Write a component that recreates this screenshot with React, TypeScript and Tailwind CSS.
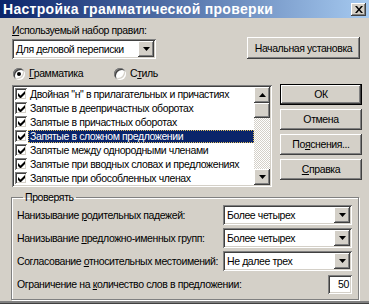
import type { ReactNode } from 'react'

const raised =
  'bg-[#d4d0c8] shadow-[inset_-1px_-1px_0_#404040,inset_1px_1px_0_#ffffff,inset_-2px_-2px_0_#808080,inset_2px_2px_0_#d4d0c8]'
const sunken =
  'bg-white shadow-[inset_1px_1px_0_#808080,inset_-1px_-1px_0_#ffffff,inset_2px_2px_0_#404040,inset_-2px_-2px_0_#d4d0c8]'

const rules = [
  'Двойная "н" в прилагательных и причастиях',
  'Запятые в деепричастных оборотах',
  'Запятые в причастных оборотах',
  'Запятые в сложном предложении',
  'Запятые между однородными членами',
  'Запятые при вводных словах и предложениях',
  'Запятые при обособленных членах',
]

function Arrow({ up = false }: { up?: boolean }) {
  return (
    <svg width="7" height="4" viewBox="0 0 7 4" className={up ? 'rotate-180' : ''}>
      <path d="M0 0h7L3.5 4z" fill="#000" />
    </svg>
  )
}

function Combo({ value, width }: { value: string; width: string }) {
  return (
    <div className={`${sunken} ${width} h-[20px] p-[2px] flex items-center shrink-0`}>
      <span className="flex-1 pl-[2px] whitespace-nowrap overflow-hidden">{value}</span>
      <div className={`${raised} w-[16px] h-[16px] flex items-center justify-center`}>
        <Arrow />
      </div>
    </div>
  )
}

function Button({ children, isDefault = false, className = '' }: { children: ReactNode; isDefault?: boolean; className?: string }) {
  if (isDefault) {
    return (
      <div className={`border border-black ${className}`}>
        <div className={`${raised} h-full flex items-center justify-center`}>{children}</div>
      </div>
    )
  }
  return <div className={`${raised} flex items-center justify-center ${className}`}>{children}</div>
}

function Check() {
  return (
    <div className={`${sunken} w-[12px] h-[12px] flex items-center justify-center shrink-0`}>
      <svg width="7" height="7" viewBox="0 0 7 7">
        <path d="M0 2v3l2 2h1l4-4V0L2.5 4.5z" fill="#000" />
      </svg>
    </div>
  )
}

function Radio({ checked, children }: { checked: boolean; children: ReactNode }) {
  return (
    <div className="flex items-center gap-[4px]">
      <div className="w-[12px] h-[12px] rounded-full bg-white shadow-[inset_1px_1px_0_#808080,inset_-1px_-1px_0_#ffffff,inset_2px_2px_0_#404040,inset_-2px_-2px_0_#d4d0c8] flex items-center justify-center">
        {checked && <div className="w-[4px] h-[4px] rounded-full bg-black" />}
      </div>
      <span>{children}</span>
    </div>
  )
}

function Row({ label, children }: { label: ReactNode; children: ReactNode }) {
  return (
    <div className="flex items-center h-[20px]">
      <span className="flex-1 whitespace-nowrap overflow-hidden">{label}</span>
      {children}
    </div>
  )
}

export default function App() {
  return (
    <div className="w-[369px] h-[304px] bg-[#d4d0c8] text-black text-[10.5px] leading-[13px] tracking-[-0.4px] font-['Liberation_Sans',Arial,sans-serif] shadow-[inset_0_-1px_0_#404040,inset_0_-3px_0_#808080] flex flex-col overflow-hidden">
      <div className="h-[18px] bg-[linear-gradient(90deg,#0a246a,#a6caf0)] flex items-center justify-between pl-[3px] pr-[3px]">
        <span className="text-white font-bold text-[14px] tracking-[0.3px] whitespace-nowrap">Настройка грамматической проверки</span>
        <div className={`${raised} w-[15px] h-[13px] flex items-center justify-center`}>
          <svg width="8" height="7" viewBox="0 0 8 7">
            <path d="M0 0h2l2 2.5L6 0h2L5 3.5 8 7H6L4 4.5 2 7H0l3-3.5z" fill="#000" />
          </svg>
        </div>
      </div>

      <div className="pl-[12px] pr-[7px] pt-[6px] flex flex-col">
        <div className="flex items-end justify-between">
          <div className="flex flex-col gap-[2px]">
            <span>
              <u>И</u>спользуемый набор правил:
            </span>
            <Combo value="Для деловой переписки" width="w-[144px]" />
          </div>
          <Button className="w-[113px] h-[22px] mr-[2px]">Начальная установка</Button>
        </div>

        <div className="flex mt-[8px] pl-[1px]">
          <div className="w-[101px]">
            <Radio checked>
              <u>Г</u>рамматика
            </Radio>
          </div>
          <Radio checked={false}>
            С<u>т</u>иль
          </Radio>
        </div>

        <div className="flex gap-[8px] mt-[5px]">
          <div className={`${sunken} w-[260px] h-[102px] p-[2px] flex`}>
            <div className="flex-1 flex flex-col overflow-hidden">
              {rules.map((r, i) => (
                <div key={r} className="h-[14px] flex items-center gap-[1px] pl-[1px]">
                  <Check />
                  <span
                    className={
                      i === 3
                        ? 'flex-1 h-[13px] bg-[#0a246a] text-white whitespace-nowrap pl-[2px] outline outline-1 outline-dotted outline-[#e0c060] -outline-offset-1'
                        : 'whitespace-nowrap pl-[2px]'
                    }
                  >
                    {r}
                  </span>
                </div>
              ))}
            </div>
            <div className="w-[16px] flex flex-col">
              <div className={`${raised} h-[16px] flex items-center justify-center`}>
                <Arrow up />
              </div>
              <div className={`${raised} h-[15px]`} />
              <div className="flex-1 bg-[conic-gradient(#ffffff_25%,#d4d0c8_0_50%,#ffffff_0_75%,#d4d0c8_0)] bg-[length:2px_2px]" />
              <div className={`${raised} h-[16px] flex items-center justify-center`}>
                <Arrow />
              </div>
            </div>
          </div>

          <div className="w-[82px] flex flex-col gap-[4px] -mt-[1px]">
            <Button isDefault className="h-[21px]">ОК</Button>
            <Button className="h-[21px]">Отмена</Button>
            <Button className="h-[21px]">
              <span>
                По<u>я</u>снения...
              </span>
            </Button>
            <Button className="h-[21px]">
              <span>
                <u>С</u>правка
              </span>
            </Button>
          </div>
        </div>

        <fieldset className="mt-[4px] -ml-[1px] mr-[3px] border border-[#808080] shadow-[1px_1px_0_#ffffff,inset_1px_1px_0_#ffffff] pl-[5px] pr-[6px] pb-[5px] pt-[1px] flex flex-col gap-[3px]">
          <legend className="px-[2px] ml-[6px]">Проверять</legend>
          <Row
            label={
              <>
                Нанизывание <u>р</u>одительных падежей:
              </>
            }
          >
            <Combo value="Более четырех" width="w-[129px]" />
          </Row>
          <Row
            label={
              <>
                Нанизывание <u>п</u>редложно-именных групп:
              </>
            }
          >
            <Combo value="Более четырех" width="w-[129px]" />
          </Row>
          <Row
            label={
              <>
                Согласование <u>о</u>тносительных местоимений:
              </>
            }
          >
            <Combo value="Не далее трех" width="w-[129px]" />
          </Row>
          <Row
            label={
              <>
                Ограничение на <u>к</u>оличество слов в предложении:
              </>
            }
          >
            <div className={`${sunken} w-[24px] h-[19px] flex items-center justify-end pr-[3px] shrink-0`}>50</div>
          </Row>
        </fieldset>
      </div>
    </div>
  )
}
